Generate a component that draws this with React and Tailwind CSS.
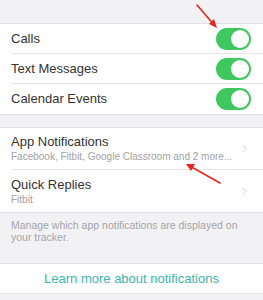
import { ChevronRight } from 'lucide-react';

const TOGGLES = ['Calls', 'Text Messages', 'Calendar Events'];

const ITEMS = [
  { title: 'App Notifications', sub: 'Facebook, Fitbit, Google Classroom and 2 more...' },
  { title: 'Quick Replies', sub: 'Fitbit' },
];

function Toggle() {
  return (
    <div className="w-[35px] h-[22px] rounded-full bg-[#3fc85f] p-[2px] flex justify-end">
      <div className="w-[18px] h-[18px] rounded-full bg-white" />
    </div>
  );
}

export default function App() {
  return (
    <div className="relative w-[263px] h-[300px] overflow-hidden bg-[#f2f2f4] font-['Liberation_Sans',Arial,sans-serif]">
      <div className="h-[23px]" />
      <div className="bg-white border-y border-[#e2e2e4]">
        {TOGGLES.map((t, i) => (
          <div key={t} className="pl-[11px]">
            <div className={`h-[30px] flex items-center justify-between pr-[12px] ${i < TOGGLES.length - 1 ? 'border-b border-[#e6e6e8]' : ''}`}>
              <span className="text-[13px] text-[#333]">{t}</span>
              <Toggle />
            </div>
          </div>
        ))}
      </div>
      <div className="h-[12px]" />
      <div className="bg-white border-y border-[#e2e2e4]">
        {ITEMS.map((it, i) => (
          <div key={it.title} className="pl-[11px]">
            <div className={`h-[42px] flex items-center justify-between pr-[12px] ${i < ITEMS.length - 1 ? 'border-b border-[#e6e6e8]' : ''}`}>
              <div className="flex flex-col">
                <span className="text-[13px] leading-[16px] text-[#333]">{it.title}</span>
                <span className="text-[10px] leading-[13px] text-[#a2a2a6]">{it.sub}</span>
              </div>
              <ChevronRight size={13} strokeWidth={1.5} className="text-[#c4c4c8]" />
            </div>
          </div>
        ))}
      </div>
      <div className="h-[50px] pl-[11px] pr-[14px] pt-[6px] text-[10.5px] leading-[12px] text-[#a5a5a9]">
        Manage which app notifications are displayed on your tracker.
      </div>
      <div className="h-[31px] bg-white border-y border-[#e2e2e4] flex items-center justify-center">
        <span className="text-[13px] text-[#3db6ab]">Learn more about notifications</span>
      </div>
      <svg className="absolute left-0 top-0 pointer-events-none" width="263" height="300" viewBox="0 0 263 300">
        <g stroke="#e8261f" strokeWidth="1.6" fill="none" strokeLinecap="round">
          <line x1="197" y1="5" x2="215" y2="26" />
          <line x1="220" y1="183" x2="188" y2="165" />
        </g>
        <g fill="#e8261f">
          <polygon points="217,28 209,24 214,19" />
          <polygon points="186,164 195,164 191,171" />
        </g>
      </svg>
    </div>
  );
}
